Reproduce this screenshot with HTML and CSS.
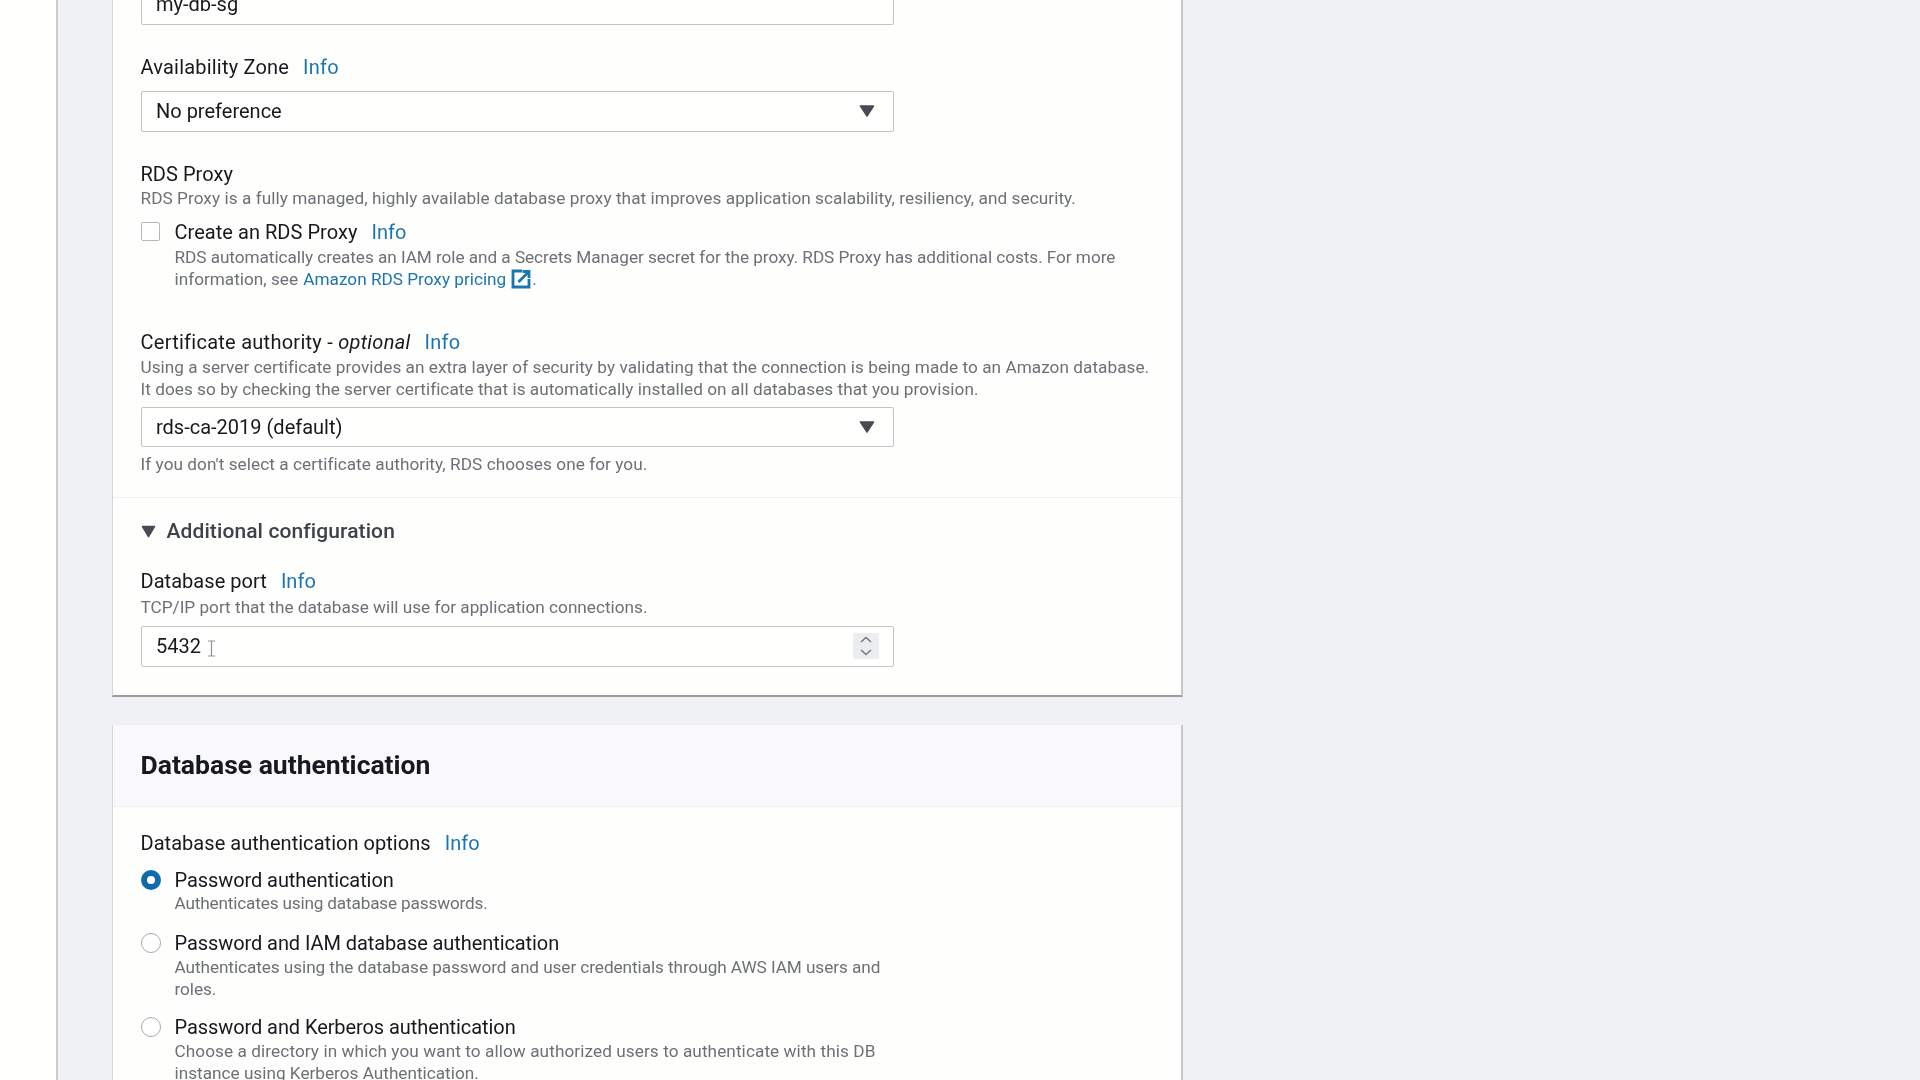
FILE: index.html
```html
<!DOCTYPE html>
<html lang="en">
<head>
<meta charset="utf-8">
<title>Create database</title>
<link rel="stylesheet" href="styles.css">
</head>
<body>
<div class="page">
  <div class="rail"></div>
  <main class="main">
    <section class="panel panel-first">
      <div class="field-box"><span class="value">my-db-sg</span></div>

      <div class="label wide mt30"><span>Availability Zone</span><a class="info">Info</a></div>
      <div class="field-box mt12"><span class="value">No preference</span>
        <svg class="caret" width="16" height="12" viewBox="0 0 16 12"><path d="M1.5 1h13L8 11z" fill="#484b53" stroke="#484b53" stroke-width="1.5" stroke-linejoin="round"/></svg>
      </div>

      <div class="label mt30"><span>RDS Proxy</span></div>
      <p class="desc wide mt1">RDS Proxy is a fully managed, highly available database proxy that improves application scalability, resiliency, and security.</p>
      <div class="check-row">
        <span class="checkbox"></span>
        <div>
          <div class="label"><span>Create an RDS Proxy</span><a class="info">Info</a></div>
          <p class="desc mt2"><span class="tight">RDS automatically creates an IAM role and a Secrets Manager secret for the proxy. RDS Proxy has additional costs. For more</span><br>information, see <a class="link">Amazon RDS Proxy pricing</a><svg class="ext" width="21" height="20" viewBox="0 0 21 20"><path d="M11 2H2v16h16V10" fill="none" stroke="#1b76b0" stroke-width="2.8"/><path d="M7.500 13 17 3.500M11.500 2.500h6.500V9" fill="none" stroke="#1b76b0" stroke-width="2.8"/></svg>.</p>
        </div>
      </div>

      <div class="label wider mt40"><span>Certificate authority - <em>optional</em></span><a class="info">Info</a></div>
      <p class="desc mid mt2">Using a server certificate provides an extra layer of security by validating that the connection is being made to an Amazon database.<br>It does so by checking the server certificate that is automatically installed on all databases that you provision.</p>
      <div class="field-box short mt7"><span class="value">rds-ca-2019 (default)</span>
        <svg class="caret" width="16" height="12" viewBox="0 0 16 12"><path d="M1.5 1h13L8 11z" fill="#484b53" stroke="#484b53" stroke-width="1.5" stroke-linejoin="round"/></svg>
      </div>
      <p class="desc wide mt6">If you don't select a certificate authority, RDS chooses one for you.</p>

      <div class="divider"></div>

      <div class="expander">
        <svg width="15" height="13" viewBox="0 0 15 13"><path d="M1.500 1.500h12L7.500 11.500z" fill="#484b53" stroke="#484b53" stroke-width="1.500" stroke-linejoin="round"/></svg>
        <span>Additional configuration</span>
      </div>

      <div class="label mt26"><span>Database port</span><a class="info">Info</a></div>
      <p class="desc mt3">TCP/IP port that the database will use for application connections.</p>
      <div class="field-box mt8"><span class="value">5432</span>
        <svg class="ibeam" width="9" height="17" viewBox="0 0 9 17"><path d="M1 1h7M1 16h7M4.500 1v15" fill="none" stroke="#8e9196" stroke-width="1.200"/></svg>
        <span class="spinner">
          <svg width="14" height="22" viewBox="0 0 14 22"><path d="M2 7l5-4.500L12 7M2 15l5 4.500L12 15" fill="none" stroke="#70747c" stroke-width="1.400"/></svg>
        </span>
      </div>
    </section>

    <section class="panel panel-second">
      <header class="panel-head"><h2>Database authentication</h2></header>
      <div class="panel-body">
        <div class="label"><span>Database authentication options</span><a class="info">Info</a></div>
        <div class="option first">
          <span class="radio on"></span>
          <div>
            <div class="label">Password authentication</div>
            <p class="desc tighter">Authenticates using database passwords.</p>
          </div>
        </div>
        <div class="option">
          <span class="radio"></span>
          <div>
            <div class="label">Password and IAM database authentication</div>
            <p class="desc tight mt1">Authenticates using the database password and user credentials through AWS IAM users and<br>roles.</p>
          </div>
        </div>
        <div class="option last">
          <span class="radio"></span>
          <div>
            <div class="label">Password and Kerberos authentication</div>
            <p class="desc mt1"><span class="loose">Choose a directory in which you want to allow authorized users to authenticate with this DB</span><br>instance using Kerberos Authentication.</p>
          </div>
        </div>
      </div>
    </section>
  </main>
</div>
</body>
</html>
```
FILE: styles.css
```css
* { box-sizing: border-box; }
html, body { margin: 0; height: 100%; }
body {
  font-family: "Roboto", "Liberation Sans", sans-serif;
  color: #16191f;
  background: #eef0f4;
  overflow: hidden;
}
.page { display: flex; height: 1080px; overflow: hidden; filter: blur(0.35px); }
.rail { width: 58px; flex: none; background: #fffffd; border-right: 2px solid #c9ccd0; }
.main { flex: 1; padding-left: 54px; background: #eef0f4; }

.panel {
  width: 1071px;
  background: #fefefc;
  border-left: 1px solid #d3d6da;
  border-right: 2px solid #c6c8ca;
}
.panel-first {
  margin-top: -40px;
  padding: 24px 0 28px 27.5px;
  border-bottom: 2px solid #9a9c9f;
}
.panel-second { margin-top: 28px; height: 400px; }
.panel-head {
  height: 82px;
  padding: 27px 0 0 27.5px;
  background: #f9f9fb;
  border-bottom: 1px solid #eeeff1;
}
h2 { margin: 0; font-size: 26.5px; line-height: 26px; font-weight: 700; color: #16191f; }
.panel-body { padding: 24px 0 0 27.5px; }

.label { font-size: 20px; line-height: 24px; letter-spacing: 0.04px; color: #16191f; }
.label em { font-style: italic; }
.label.wide { letter-spacing: 0.2px; }
.label.wider { letter-spacing: 0.26px; }
.option .label { letter-spacing: -0.08px; }
.info { margin-left: 14px; color: #1b76b0; }
.desc { margin: 0; font-size: 17.2px; line-height: 22px; color: #6c7178; }
.desc.wide { letter-spacing: 0.055px; }
.desc.mid { letter-spacing: 0.04px; }
.desc.tight { letter-spacing: -0.07px; }
.tight { letter-spacing: -0.05px; }
.loose { letter-spacing: 0.08px; }
.desc.tighter { letter-spacing: -0.17px; }
.link { margin-left: 1px; color: #1b76b0; }
.ext { margin-left: 5px; vertical-align: -4px; }

.field-box {
  display: flex;
  align-items: center;
  width: 753px;
  height: 41px;
  padding: 0 10px 1px 14.5px;
  background: #fffffd;
  border: 1px solid #c2c4c7;
  border-radius: 2px;
}
.field-box.short { height: 40px; }
.value { font-size: 20px; color: #16191f; }
.caret { margin-left: auto; margin-right: 8px; }
.ibeam { margin: 4px 0 0 6px; }
.spinner {
  display: flex;
  align-items: center;
  justify-content: center;
  width: 26px;
  height: 26px;
  margin-left: auto;
  margin-right: 4px;
  background: #ecedf1;
  border-radius: 2px;
}

.check-row { display: flex; margin-top: 11px; }
.checkbox {
  flex: none;
  width: 19px;
  height: 19px;
  margin: 2px 15px 0 0;
  background: #fff;
  border: 1px solid #b4b7bb;
  border-radius: 2px;
}
.divider { margin: 22px 0 0 -27.5px; height: 1px; background: #eff0f2; }
.expander {
  display: flex;
  align-items: center;
  gap: 11px;
  margin-top: 21px;
  font-size: 21px;
  line-height: 24px;
  font-weight: 500;
  letter-spacing: 0.1px;
  color: #3d424a;
}

.option { display: flex; margin-top: 17px; }
.option.first { margin-top: 13px; }
.option.last { margin-top: 15px; }
.radio {
  flex: none;
  width: 20px;
  height: 20px;
  margin: 2px 14px 0 0;
  background: #fff;
  border: 1px solid #a8abaf;
  border-radius: 50%;
}
.radio.on { border: 6px solid #0f6bad; }

.mt1 { margin-top: 1px; }
.mt2 { margin-top: 2px; }
.mt3 { margin-top: 3px; }
.mt6 { margin-top: 6px; }
.mt7 { margin-top: 7px; }
.mt8 { margin-top: 8px; }
.mt12 { margin-top: 12px; }
.mt26 { margin-top: 26px; }
.mt30 { margin-top: 30px; }
.mt40 { margin-top: 40px; }
```
